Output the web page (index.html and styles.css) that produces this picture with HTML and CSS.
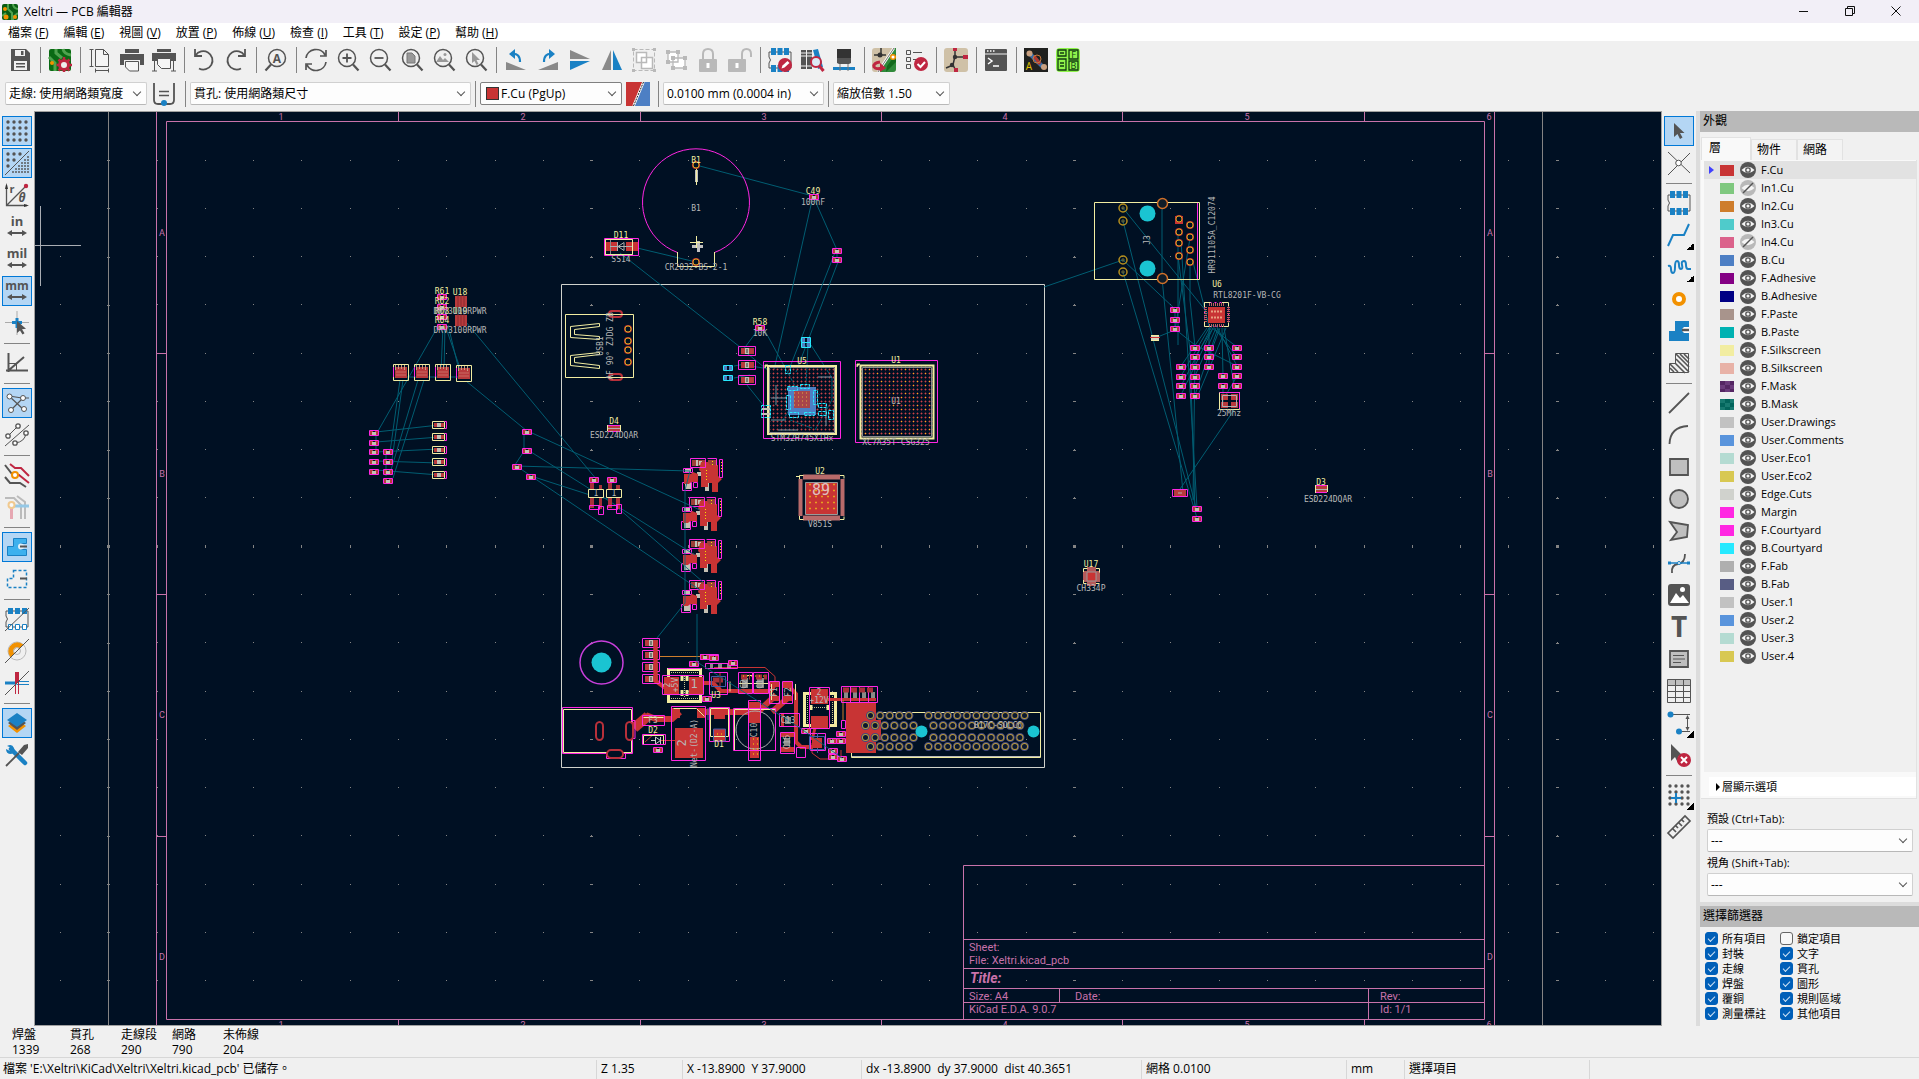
FILE: index.html
```html
<!DOCTYPE html>
<html lang="zh-Hant">

<head>
    <meta charset="UTF-8" />
    <meta name="viewport" content="width=device-width, initial-scale=1.0" />
    <title>Xeltri — PCB 編輯器</title>
    <link rel="stylesheet" href="styles.css">
</head>

<body>
    <!-- Shared symbols -->
    <svg class="defs" width="0" height="0">
        <symbol id="eye" viewBox="0 0 16 16">
            <circle cx="8" cy="8" r="8" fill="#545454" />
            <path d="M1.5 8Q8 1.5 14.5 8Q8 14.5 1.5 8z" fill="#f5f5f5" />
            <circle cx="8" cy="8" r="2.2" fill="none" stroke="#545454" stroke-width="1.3" />
        </symbol>
        <symbol id="eye-off" viewBox="0 0 16 16">
            <circle cx="8" cy="8" r="8" fill="#b9b9b9" />
            <path d="M1.5 8Q8 1.5 14.5 8Q8 14.5 1.5 8z" fill="#f5f5f5" />
            <path d="M3 13L13 3" stroke="#545454" stroke-width="1.5" />
        </symbol>
        <symbol id="lens" viewBox="0 0 24 24">
            <circle cx="11" cy="10" r="8.5" fill="none" stroke="#545454" stroke-width="1.5" />
            <path d="M17 16.5l5.5 6" stroke="#545454" stroke-width="2.2" />
        </symbol>
        <symbol id="chip" viewBox="0 0 24 24">
            <path d="M1 4h22v16H1v-5q3-3 0-6z" fill="none" stroke="#545454" />
            <path d="M3 0h5v7H3zM9.5 0h5v7h-5zM16 0h5v7h-5zM3 17h5v7H3zM9.5 17h5v7h-5zM16 17h5v7h-5z" fill="#1a81c4" />
        </symbol>
        <symbol id="dblarrow" viewBox="0 0 24 24">
            <path d="M4 18h16" stroke="#545454" stroke-width="2" />
            <path d="M2 18l5-3v6zM22 18l-5-3v6z" fill="#545454" />
        </symbol>
    </svg>

    <header class="titlebar">
        <svg class="app-icon" viewBox="0 0 16 16">
            <rect width="16" height="16" rx="2" fill="#0a5c14" />
            <path d="M6 0v5l4 4v7M11 0q0 4 5 5M0 12l4-3M11 16v-3l5-4" fill="none" stroke="#4ea34e" stroke-width="2" />
            <circle cx="3" cy="5" r="2" fill="#f29100" /><circle cx="4" cy="13" r="2.5" fill="#f29100" /><circle cx="13" cy="13" r="2" fill="#f29100" />
        </svg>
        <h1>Xeltri — PCB 編輯器</h1>
        <div class="window-buttons">
            <button title="最小化"><svg viewBox="0 0 10 10"><path d="M0 5.5h9" /></svg></button>
            <button title="還原"><svg viewBox="0 0 10 10"><path d="M.5 2.5h7v7h-7zM2.5 2V.5h7v7H8" /></svg></button>
            <button title="關閉"><svg viewBox="0 0 10 10"><path d="M.5.5l9 9M9.5.5l-9 9" /></svg></button>
        </div>
    </header>

    <nav class="menubar">
        <a href="#">檔案 (<u>F</u>)</a>
        <a href="#">編輯 (<u>E</u>)</a>
        <a href="#">視圖 (<u>V</u>)</a>
        <a href="#">放置 (<u>P</u>)</a>
        <a href="#">佈線 (<u>U</u>)</a>
        <a href="#">檢查 (<u>I</u>)</a>
        <a href="#">工具 (<u>T</u>)</a>
        <a href="#">設定 (<u>P</u>)</a>
        <a href="#">幫助 (<u>H</u>)</a>
    </nav>

    <!-- Main toolbar -->
    <div class="toolbar main-tools">
        <button title="儲存"><svg viewBox="0 0 24 24"><path d="M3 1h15l4 4v18H3z" fill="#545454" /><path d="M7 2h10v6H7zM6 13h13v9H6z" fill="#f0f0f0" /><path d="M13 3h2.5v4H13zM8 15h9v1.5H8zM8 18h9v1.5H8z" fill="#545454" /></svg></button>
        <i class="sep"></i>
        <button title="電路板設定"><svg viewBox="0 0 24 24"><rect x="1" y="1" width="22" height="22" rx="2" fill="#0a6a14" /><path d="M8 1v4l6 5M15 1q1 5 8 6M1 9l6 6v8" fill="none" stroke="#4ea34e" stroke-width="3" /><circle cx="4" cy="15" r="2" fill="#f29100" /><circle cx="16" cy="17" r="4.5" fill="#eee" stroke="#bf2641" stroke-width="3" /><path d="M16 9v3M16 21v3M8.5 17h3M20 17h4M10.5 11.5l2 2M21.5 11.5l-2 2M10.5 22.5l2-2M21.5 22.5l-2-2" stroke="#bf2641" stroke-width="2.5" /></svg></button>
        <i class="sep"></i>
        <button title="頁面設定"><svg viewBox="0 0 24 24"><path d="M7.5 1.5h8l5 5v12h-13zM15.500 1.500v5h5" fill="#f5f5f5" stroke="#545454" /><path d="M3.5 1v18M1.5 1.5h4M1.5 18.5h4M7 22.500h14M7.500 20.5v4M20.500 20.5v4" stroke="#545454" fill="none" /></svg></button>
        <button title="列印"><svg viewBox="0 0 24 24"><path d="M5 1h14v4H5zM0 6h24v11h-4v-5H4v5H0z" fill="#545454" /><path d="M5.5 13.5h13v9.500h-9l-4-4z" fill="#f5f5f5" stroke="#545454" /></svg></button>
        <button title="繪圖"><svg viewBox="0 0 24 24"><path d="M5 1h14v3H5zM0 5h24v8H0z" fill="#545454" /><path d="M5.5 10.5h13v10h-9l-4-4zM2.5 13v10M21.5 13v10M0 23h5M19 23h5" fill="#f5f5f5" stroke="#545454" /></svg></button>
        <i class="sep"></i>
        <button title="復原"><svg viewBox="0 0 24 24"><path d="M3 1v7h7M3.500 7.500A9.200 9.200 0 1 1 7 20.500" fill="none" stroke="#545454" stroke-width="1.800" /></svg></button>
        <button title="重做"><svg viewBox="0 0 24 24"><path d="M21 1v7h-7M20.500 7.500A9.200 9.200 0 1 0 17 20.500" fill="none" stroke="#545454" stroke-width="1.800" /></svg></button>
        <i class="sep"></i>
        <button title="尋找"><svg viewBox="0 0 24 24"><circle cx="13" cy="10" r="8.5" fill="none" stroke="#545454" stroke-width="1.5" /><path d="M7 16.5l-5.5 6" stroke="#545454" stroke-width="2.2" /><text x="13" y="14.500" class="glyph" font-size="12">A</text></svg></button>
        <i class="sep"></i>
        <button title="重新整理"><svg viewBox="0 0 24 24"><path d="M2 10A10 9.500 0 0 1 21 7M22 2v6h-6M22 14A10 9.500 0 0 1 3 17M2 22v-6h6" fill="none" stroke="#545454" stroke-width="1.700" /></svg></button>
        <button title="放大"><svg viewBox="0 0 24 24"><use href="#lens" /><path d="M11 5.5v9M6.5 10h9" stroke="#545454" stroke-width="1.800" /></svg></button>
        <button title="縮小"><svg viewBox="0 0 24 24"><use href="#lens" /><path d="M6.5 10h9" stroke="#545454" stroke-width="1.800" /></svg></button>
        <button title="縮放至頁面"><svg viewBox="0 0 24 24"><use href="#lens" /><path d="M7 5h5l3 3v7H7z" fill="#999" stroke="#777" /></svg></button>
        <button title="縮放至物件"><svg viewBox="0 0 24 24"><use href="#lens" /><path d="M4 14l4-6 3 4 2-2 4 4z" fill="#999" /><circle cx="13" cy="6.5" r="1.5" fill="#999" /></svg></button>
        <button title="縮放至選取"><svg viewBox="0 0 24 24"><use href="#lens" /><path d="M8 4v11l2.5-2 2 4 2-1-2-4h3.500z" fill="#999" /></svg></button>
        <i class="sep"></i>
        <button title="逆時針旋轉"><svg viewBox="0 0 24 24"><path d="M2 14v8h20z" fill="#898989" /><path d="M8 6q8-1 8 8" fill="none" stroke="#1a81c4" stroke-width="2.200" /><path d="M5 6l6-5v10z" fill="#1a81c4" /></svg></button>
        <button title="順時針旋轉"><svg viewBox="0 0 24 24"><path d="M22 14v8H2z" fill="#898989" /><path d="M16 6q-8-1-8 8" fill="none" stroke="#1a81c4" stroke-width="2.200" /><path d="M19 6l-6-5v10z" fill="#1a81c4" /></svg></button>
        <button title="垂直翻轉"><svg viewBox="0 0 24 24"><path d="M2 2v9h20z" fill="#898989" /><path d="M2 22v-9h20z" fill="#1a81c4" /></svg></button>
        <button title="水平翻轉"><svg viewBox="0 0 24 24"><path d="M2 22h9V2z" fill="#898989" /><path d="M22 22h-9V2z" fill="#1a81c4" /></svg></button>
        <button title="群組" disabled><svg viewBox="0 0 24 24"><path d="M1.5 1.5h21v21h-21z" fill="none" stroke="#b9b9b9" stroke-dasharray="4 2" /><path d="M4.5 4.5h10v10h-10zM9.500 9.500h11v11h-11z" fill="#fff" stroke="#b9b9b9" stroke-width="1.5" /><path d="M0 0h3v3H0zM21 0h3v3h-3zM0 21h3v3H0zM21 21h3v3h-3z" fill="#b9b9b9" /></svg></button>
        <button title="取消群組" disabled><svg viewBox="0 0 24 24"><path d="M4 4h10v10H4zM9 10h12v10H9z" fill="#fff" stroke="#b9b9b9" stroke-width="1.3" /><path d="M2 2h4v4H2zM12 2h4v4h-4zM2 12h4v4H2zM7 8h4v4H7zM19 8h4v4h-4zM7 18h4v4H7zM19 18h4v4h-4z" fill="#b9b9b9" /></svg></button>
        <button title="鎖定" disabled><svg viewBox="0 0 24 24"><path d="M7 12V6q0-5 5-5t5 5v6" fill="none" stroke="#b9b9b9" stroke-width="2" /><rect x="3" y="11" width="18" height="13" rx="1" fill="#b9b9b9" /><path d="M12 15v5" stroke="#fff" stroke-width="3" /></svg></button>
        <button title="解除鎖定" disabled><svg viewBox="0 0 24 24"><path d="M14 12V6q0-5 4.500-5T23 6v3" fill="none" stroke="#b9b9b9" stroke-width="2" /><rect x="0" y="11" width="18" height="13" rx="1" fill="#b9b9b9" /><path d="M9 15v5" stroke="#fff" stroke-width="3" /></svg></button>
        <i class="sep"></i>
        <button title="封裝編輯器"><svg viewBox="0 0 24 24"><use href="#chip" /><circle cx="17" cy="17" r="7" fill="#bf2641" /><path d="M13.5 20.500l1-3 5-4.500 2 2-5 4.500z" fill="#fff" /></svg></button>
        <button title="瀏覽封裝庫"><svg viewBox="0 0 24 24"><path d="M1 2h5v19H1zM7 2h5v19H7z" fill="#545454" /><path d="M1 5h11M1 8h11M1 18h11" stroke="#f0f0f0" /><path d="M13 2l5-1 5 18-5 2z" fill="#1a81c4" /><circle cx="16" cy="14" r="5" fill="#dcebf5" stroke="#bf2641" stroke-width="2" /><path d="M19.500 18l4 5" stroke="#bf2641" stroke-width="3" /></svg></button>
        <button title="3D 檢視器"><svg viewBox="0 0 24 24"><path d="M5 1h14v9H5z" fill="#333" /><path d="M5 10h14v5l-2 1H7l-2-1z" fill="#545454" /><path d="M1 19h22v3H1z" fill="#1a81c4" /><path d="M8 16v7M16 16v7" stroke="#777" /></svg></button>
        <i class="sep"></i>
        <button title="從原理圖更新"><svg viewBox="0 0 24 24"><rect width="24" height="24" rx="3" fill="#cfc1a7" /><path d="M22 0h2v21q0 3-3 3H6z" fill="#2f8a3a" /><path d="M14 24l10-10v-8l-9 12z" fill="#126a1c" /><path d="M9 0v8M2 7h12" stroke="#333" stroke-width="1.500" /><circle cx="8" cy="7" r="2.500" fill="#333" /><path d="M22 0L6 24" stroke="#fff" stroke-width="2.500" /><path d="M22 0L6 24" stroke="#333" stroke-width=".7" /><circle cx="21" cy="9" r="2.300" fill="#fff" stroke="#f29100" stroke-width="1.500" /><path d="M8 14q-7 1-6 5 2 3 8 1" fill="none" stroke="#bf2641" stroke-width="3" /><path d="M8 15l6 5-6 4z" fill="#bf2641" /></svg></button>
        <button title="設計規則檢查"><svg viewBox="0 0 24 24"><path d="M2.5 2.5h4v4h-4zM2.5 9.5h4v4h-4zM2.5 16.5h4v4h-4z" fill="none" stroke="#545454" /><path d="M9 4.500h9M9 11.500h4" stroke="#545454" /><circle cx="17" cy="16" r="7" fill="#bf2641" /><path d="M13.5 16l3 3 4.500-5" fill="none" stroke="#fff" stroke-width="2" /></svg></button>
        <i class="sep"></i>
        <button title="原理圖編輯器"><svg viewBox="0 0 24 24"><rect width="24" height="24" rx="3" fill="#cfc1a7" /><path d="M11 0v8l-2 9M11 9h10M2 20l7-3 3 6" fill="none" stroke="#333" stroke-width="1.500" /><path d="M9 0h4v3H9zM19 7h5v4h-5zM10 20h4v4h-4z" fill="#bf2641" /><circle cx="11" cy="9" r="2.200" fill="#333" /><circle cx="8" cy="17" r="2.200" fill="#333" /></svg></button>
        <i class="sep"></i>
        <button title="指令稿主控台"><svg viewBox="0 0 24 24"><rect x="1" y="1" width="22" height="22" rx="1" fill="#545454" /><path d="M1 6h22" stroke="#f0f0f0" /><path d="M3 3h1.500M6 3h1.500M9 3h1.500" stroke="#fff" stroke-width="1.500" /><path d="M4 10l4 3-4 3M9 18h6" fill="none" stroke="#fff" stroke-width="1.500" /></svg></button>
        <i class="sep"></i>
        <button title="外掛程式"><svg viewBox="0 0 24 24"><rect width="24" height="24" fill="#20211f" /><path d="M5 5l14 14" stroke="#3a6ea8" stroke-width="4" /><path d="M10 8l6 8" stroke="#b2372e" stroke-width="3" /><circle cx="5.500" cy="5.500" r="3" fill="#c9a080" /><circle cx="20" cy="19" r="3" fill="#c9a080" /><circle cx="13" cy="11" r="4" fill="none" stroke="#c97a3e" /><text x="5" y="22" font-size="10" text-anchor="middle" fill="#e0c000">A</text></svg></button>
        <button title="FAB 工具"><svg viewBox="0 0 24 24"><rect width="24" height="24" rx="4" fill="#8ff34b" /><path d="M2 2h8v6H2zM2 11h8v11H2zM13 2h9v9h-9zM13 13h9v9h-9zM4 5h4M4 15h4M4 18h4" fill="none" stroke="#123b12" stroke-width="1.300" /><text x="17.500" y="10" font-size="9" text-anchor="middle" fill="#123b12">F</text><text x="17.500" y="21" font-size="9" text-anchor="middle" fill="#123b12">B</text></svg></button>
    </div>

    <!-- Track / via / layer selectors -->
    <div class="toolbar aux-tools">
        <span class="select w-track"><select aria-label="走線"><option>走線: 使用網路類寬度</option></select></span>
        <button title="自動走線寬度"><svg viewBox="0 0 24 24"><path d="M2 1v17q0 4 4 4h12q4 0 4-4V1" fill="none" stroke="#545454" stroke-width="1.800" /><path d="M7 9.500h10M7 13.500h10" stroke="#545454" stroke-width="1.500" /><circle cx="12" cy="21" r="3" fill="#1a81c4" /></svg></button>
        <i class="sep"></i>
        <span class="select w-via"><select aria-label="貫孔"><option>貫孔: 使用網路類尺寸</option></select></span>
        <i class="sep"></i>
        <span class="select w-layer dark"><i class="swatch fcu"></i><select aria-label="層"><option>F.Cu (PgUp)</option></select></span>
        <button title="層對"><svg viewBox="0 0 24 24"><path d="M0 0h17L7 24H0z" fill="#c83434" /><path d="M17 0h7v24H7z" fill="#4d7fc4" /><path d="M17.500 0L7.500 24" stroke="#fff" stroke-width="2.500" /><path d="M17.500 0L7.500 24" stroke="#222" stroke-dasharray="2 1" /></svg></button>
        <i class="sep"></i>
        <span class="select w-grid"><select aria-label="網格"><option>0.0100 mm (0.0004 in)</option></select></span>
        <i class="sep"></i>
        <span class="select w-zoom"><select aria-label="縮放"><option>縮放倍數 1.50</option></select></span>
    </div>

    <main class="workspace">
        <!-- Left display options -->
        <div class="toolbar side">
            <button class="on" title="顯示網格"><svg viewBox="0 0 24 24"><path d="M3 3h20M3 9h20M3 15h20M3 21h20" stroke="#545454" stroke-width="3.400" stroke-linecap="round" stroke-dasharray="0 6" /></svg></button>
            <button class="on" title="網格覆寫"><svg viewBox="0 0 24 24"><path d="M3 3h14M3 9h8M3 15h2" stroke="#545454" stroke-width="3.400" stroke-linecap="round" stroke-dasharray="0 6" /><path d="M23 5v18M20 8v15M17 11v12M14 14v9M11 17v6M8 20v3" stroke="#545454" stroke-width="2" stroke-dasharray="2 1" opacity=".7" /><path d="M0 24L24 0" stroke="#545454" /></svg></button>
            <button title="極座標"><svg viewBox="0 0 24 24"><path d="M1.5 2v20.500H22M1.5 22.500L21 3" fill="none" stroke="#545454" stroke-width="1.300" /><path d="M0 6l1.500-6L3 6zM19 21l5 1.500-5 1.500z" fill="#333" /><circle cx="21" cy="3" r="2.200" fill="#bf2641" /><text x="7" y="10" class="glyph" font-size="11">r</text><text x="17" y="19" class="glyph" font-size="12" font-style="italic">θ</text></svg></button>
            <button title="英寸"><svg viewBox="0 0 24 24"><text x="12" y="11" class="glyph" font-size="13">in</text><use href="#dblarrow" /></svg></button>
            <button title="密耳"><svg viewBox="0 0 24 24"><text x="12" y="11" class="glyph" font-size="13">mil</text><use href="#dblarrow" /></svg></button>
            <button class="on" title="毫米"><svg viewBox="0 0 24 24"><text x="12" y="11" class="glyph" font-size="12">mm</text><use href="#dblarrow" /></svg></button>
            <button title="全螢幕游標"><svg viewBox="0 0 24 24"><path d="M12 0v24M0 11.500h24" stroke="#aaa" /><path d="M12 7v10M7 11.500h10" stroke="#1a81c4" stroke-width="3" /><path d="M12 10v12l3-2.500 2.500 4 2-1.200-2.500-4 4-.5z" fill="#545454" /></svg></button>
            <i class="sep"></i>
            <button title="角度限制"><svg viewBox="0 0 24 24"><path d="M3.500 2v19M1 19.500h22M3.500 19.500L19 6" fill="none" stroke="#545454" stroke-width="2" /><path d="M3.500 12.500h8v7" fill="none" stroke="#545454" /></svg></button>
            <i class="sep"></i>
            <button class="on" title="顯示飛線"><svg viewBox="0 0 24 24"><path d="M4 5l15 14M6 19L18 7M4 5l13 2h7" fill="none" stroke="#545454" stroke-width="1.200" /><g fill="#fff" stroke="#545454"><circle cx="4.500" cy="5.500" r="2.500" /><circle cx="18" cy="7" r="2.500" /><circle cx="6" cy="19" r="2.500" /><circle cx="19" cy="18" r="2.500" /></g></svg></button>
            <button title="曲線飛線"><svg viewBox="0 0 24 24"><path d="M0 23L24 2M3 13l9-9M10 20q10-1 11-10" fill="none" stroke="#545454" /><g fill="#fff" stroke="#545454" stroke-width="1.300"><circle cx="3" cy="13" r="2.200" /><circle cx="13" cy="3" r="2.200" /><circle cx="10" cy="20" r="2.200" /><circle cx="21" cy="10" r="2.200" /></g></svg></button>
            <i class="sep"></i>
            <button title="非作用層模式"><svg viewBox="0 0 24 24"><path d="M0 2l7 9h4M0 14l5 6h10l6 4" fill="none" stroke="#545454" stroke-width="2" /><path d="M5 1l5 4h6l8 8M10 12h4l10 8" fill="none" stroke="#bf2641" stroke-width="2" /><circle cx="10" cy="12" r="3" fill="#fff" stroke="#f29100" stroke-width="2" /></svg></button>
            <button title="網路反白" class="faded"><svg viewBox="0 0 24 24"><path d="M0 3h9l7 7v14M12 1l8 6v17" fill="none" stroke="#999" stroke-width="2" /><path d="M8 11h16" stroke="#5aaee0" stroke-width="3" /><path d="M6.500 12v12" stroke="#e0788a" stroke-width="3" /><circle cx="6.500" cy="10" r="3" fill="#fff" stroke="#f2b050" stroke-width="2" /></svg></button>
            <i class="sep"></i>
            <button class="on" title="覆銅填充"><svg viewBox="0 0 24 24"><path d="M8.500 3.500h13v5H16q-4 3 0 6h5.500v6h-19v-9h6z" fill="#3db1ee" stroke="#1a81c4" /><circle cx="16" cy="11.500" r="3" fill="#dff0fb" /><path d="M15 11.500h7" stroke="#545454" stroke-width="2" /></svg></button>
            <button title="覆銅輪廓"><svg viewBox="0 0 24 24"><path d="M8.500 3.500h13v17h-19v-9h6z" fill="none" stroke="#1a81c4" stroke-width="1.500" stroke-dasharray="3 2" /><path d="M15 11.500h7" stroke="#545454" stroke-width="2" /></svg></button>
            <i class="sep"></i>
            <button title="焊盤輪廓"><svg viewBox="0 0 24 24"><path d="M1 4h22v16H1v-5q3-3 0-6z" fill="none" stroke="#545454" /><path d="M3 1h5v6H3zM10 1h5v6h-5zM17 1h5v6h-5z" fill="#1a81c4" /><path d="M3.500 17.500h4v5h-4zM10.500 17.500h4v5h-4zM17.500 17.500h4v5h-4z" fill="#fff" stroke="#1a81c4" /><path d="M0 24L24 1" stroke="#545454" /></svg></button>
            <button title="貫孔輪廓"><svg viewBox="0 0 24 24"><circle cx="12" cy="12" r="9" fill="none" stroke="#b9b9b9" /><path d="M6 18A8.500 8.500 0 0 1 18 6l-3.500 3.500a3.500 3.500 0 0 0-5 5z" fill="#f29100" stroke="#f29100" /><circle cx="12" cy="12" r="3.500" fill="none" stroke="#b9b9b9" /><path d="M0 24L24 0" stroke="#545454" /></svg></button>
            <button title="走線輪廓"><svg viewBox="0 0 24 24"><path d="M0 12h12" stroke="#1a81c4" stroke-width="3" /><path d="M12 10.500h12M12 13.500h12" stroke="#1a81c4" /><path d="M12 1v11" stroke="#bf2641" stroke-width="4" /><path d="M10.500 12v11M13.500 12v11" stroke="#bf2641" /><path d="M0 24L24 0" stroke="#545454" /></svg></button>
            <i class="sep"></i>
            <button class="on" title="外觀管理員"><svg viewBox="0 0 24 24"><path d="M3 15l9-6 9 6-9 7z" fill="#f29100" /><path d="M3 12l9-6 9 6-9 7z" fill="#545454" /><path d="M2 9l10-7 10 7-10 7z" fill="#1a81c4" /></svg></button>
            <button title="屬性"><svg viewBox="0 0 24 24"><path d="M6 6l14 14" stroke="#1a81c4" stroke-width="4.500" stroke-linecap="round" /><path d="M2 3q5-3 7 2t-3 6q-5 0-5-5l4 2 2-3z" fill="#1a81c4" /><path d="M1 23L14 10" stroke="#545454" stroke-width="1.800" /><path d="M13 9l6-7 4-1v4l-6 7z" fill="#545454" /></svg></button>
        </div>

        <!-- Board canvas -->
        <div class="board">
            <svg viewBox="35 112 1626 913" preserveAspectRatio="xMinYMin slice">
                <defs>
                    <pattern id="balls" x="0" y="0" width="4" height="4" patternUnits="userSpaceOnUse">
                        <path d="M0 1h3v1H0zM1 0h1v3H1z" fill="#58202c" />
                        <path d="M1 1h1v1H1z" fill="#c04850" />
                    </pattern>
                    <pattern id="vias" x="0" y="0" width="12" height="12" patternUnits="userSpaceOnUse">
                        <path d="M1 1h1v1H1zM5 9h1v1H5z" fill="#ffe000" />
                    </pattern>
                    <!-- small two-pad resistor / capacitor -->
                    <g id="r">
                        <path d="M-4 -2h3v4h-3zM1 -2h3v4H1z" class="cu" />
                        <path d="M-2 -1h4v3h-4z" class="body" />
                        <path d="M-4.5 -2.500h9v5h-9z" class="court" />
                    </g>
                    <g id="rb">
                        <path d="M-4 -2h3v4h-3zM1 -2h3v4H1z" fill="#4d7fc4" />
                        <path d="M-4.5 -2.500h9v5h-9z" class="bcourt" />
                    </g>
                    <!-- larger capacitor -->
                    <g id="c">
                        <path d="M-6 -3h5v6h-5zM2 -3h5v6H2z" class="cu" />
                        <path d="M-2 -3h4v6h-4z" class="body" />
                        <path d="M-1 -1h2M-1 1h2" stroke="#333" />
                        <path d="M-8.500 -4.500h17v9h-17z" class="court" />
                    </g>
                    <g id="led">
                        <path d="M-5 -2h4v4h-4zM2 -2h4v4H2z" class="cu" />
                        <path d="M-2 -2h4v4h-4z" class="body" />
                        <path d="M-6.500 -3.500h12v7h-12z" class="silk" />
                        <path d="M5.500 -3.500h2v7h-2" class="court" />
                    </g>
                    <!-- driver chip -->
                    <g id="drv">
                        <path d="M-6 -5H6V6H-6z" class="cu" />
                        <path d="M-5.500 -7v5M-2.500 -7v4M.5 -7v4M3.500 -7v5" stroke="#c8a080" />
                        <path d="M-5 0H5M-5 3H5" stroke="#c86a62" />
                        <path d="M-7.500 -7.500h15v16h-15z" class="silk" />
                        <path d="M-7.500 -5v10" class="court" />
                    </g>
                    <!-- plated hole -->
                    <g id="th"><circle r="4" fill="#c83434" /><circle r="3" fill="#001023" stroke="#d9a520" /></g>
                    <g id="npth"><circle r="4" fill="none" stroke="#b58f1e" stroke-width="1.500" /><path d="M-2 0h4M0 -2v4" stroke="#6a6a3a" /></g>
                    <!-- buck stage, repeated down the board -->
                    <g id="stage">
                        <path d="M10 2h13v6H10zM26 2h8v6h-8z" fill="#9c4038" />
                        <path d="M14 2h2v6h-2zM17 3h3v4h-3zM3 11h6v3H3zM3 25h6v6H3zM23 25h4v8h-4zM15 14h6v4h-6z" class="body" />
                        <path d="M.5 24.500h9v8h-9zM11.500 24.500h4v5h-4zM1.500 10.500h9v4h-9z" class="court" />
                        <path d="M2 16h7l2-2 5 2v8H9l-2 2H2zM19 4h7l2 3h8v11l4 3-4 4v9h-6v-9h-4v4h-7V14l-2-2z" fill="#c83434" />
                        <path d="M8.500.5h15v9h-15zM25.500.5h9v7M37.500 1.500h3v18h-3z" class="court" />
                        <path d="M24.500 12v12M30.500 3v4M39.500 4v12" stroke="#ffe000" stroke-dasharray="1 2" />
                    </g>
                </defs>

                <!-- Grid -->
                <g class="grid" shape-rendering="crispEdges">
                    <path d="M60 160.500H1661M60 208.500H1661M60 256.500H1661M60 304.500H1661M60 353.500H1661M60 401.500H1661M60 449.500H1661M60 497.500H1661M60 594.500H1661M60 642.500H1661M60 691.500H1661M60 739.500H1661M60 787.500H1661M60 835.500H1661M60 884.500H1661M60 932.500H1661M60 980.500H1661" stroke-dasharray="1 47.280" />
                    <path d="M60 546.500H1661" stroke-width="3" stroke-dasharray="1 47.280" />
                    <path d="M108.500 160V1025M591.500 160V1025M1074.500 160V1025M1557.500 160V1025" stroke-width="3" stroke-dasharray="1 47.250" />
                    <path d="M590 545h3v3h-3zM107 545h3v3h-3zM1073 545h3v3h-3zM1556 545h3v3h-3z" fill="#848484" stroke="none" />
                    <path d="M108.500 112V1025M1542.500 112V1025" />
                </g>

                <!-- Drawing sheet -->
                <g class="sheet">
                    <path d="M156.500 112V1025M166.500 121.500H1484.500V1019.500H166.500zM1494.500 112V1025" />
                    <path d="M156.500 353.500h10M156.500 594.500h10M156.500 836.500h10M1484.500 353.500h10M1484.500 594.500h10M1484.500 836.500h10M398.500 112v9M640.500 112v9M881.500 112v9M1122.500 112v9M1364.500 112v9M398.500 1019v6M640.500 1019v6M881.500 1019v6M1122.500 1019v6M1364.500 1019v6" />
                    <path d="M963.500 1019V865.500H1484M963.500 939.500H1484M963.500 968.500H1484M963.500 988.500H1484M963.500 1002.500H1484M1059.500 988v14M1368.500 988v31" />
                </g>
                <g class="sheet-mark">
                    <text x="281" y="120">1</text><text x="523" y="120">2</text><text x="764" y="120">3</text><text x="1005" y="120">4</text><text x="1247" y="120">5</text><text x="1489" y="120">6</text>
                    <text x="281" y="1028">1</text><text x="523" y="1028">2</text><text x="764" y="1028">3</text><text x="1005" y="1028">4</text><text x="1247" y="1028">5</text><text x="1489" y="1028">6</text>
                    <text x="162" y="236">A</text><text x="162" y="477">B</text><text x="162" y="718">C</text><text x="162" y="960">D</text>
                    <text x="1490" y="236">A</text><text x="1490" y="477">B</text><text x="1490" y="718">C</text><text x="1490" y="960">D</text>
                </g>
                <g class="sheet-text">
                    <text x="969" y="951">Sheet:</text>
                    <text x="969" y="964">File: Xeltri.kicad_pcb</text>
                    <text x="970" y="983" class="title">Title:</text>
                    <text x="969" y="1000">Size: A4</text><text x="1075" y="1000">Date:</text><text x="1380" y="1000">Rev:</text>
                    <text x="969" y="1013">KiCad E.D.A. 9.0.7</text><text x="1380" y="1013">Id: 1/1</text>
                </g>

                <!-- Cursor -->
                <path d="M40.500 206v80M35 245.500h46" stroke="#a9adb3" />

                <!-- Edge cuts -->
                <path d="M561.500 284.500H1044.500V767.500H561.500z" fill="none" stroke="#d0d2cd" />

                <!-- Inductor frames and solid copper -->
                <g class="silk-thick">
                    <path d="M668.500 678v-8.500h32v8.500M668.500 694v7.500h32v-7.500M682 675v6M682 690v6M687 675v6M687 690v6" />
                    <path d="M811 693.500h-6.500v32h6.500M829 693.500h6.500v32h-6.500M811 705v5M828 705v5" />
                </g>
                <path d="M671 672.500h27M671 698.500h27M807.500 696v27M832.500 696v27M684.500 676v22M812 707.500h15" fill="none" stroke="#c9c68a" stroke-dasharray="1 1" />
                <g fill="#c83434">
                    <path d="M846 702h30v18h5v20h-5v13h-30z" />
                    <path d="M664 677h15v17h-15zM689 677h14v17h-14zM811 689h17v15h-17zM811 716h17v12h-17z" />
                    <path d="M675 728h28v30h-28zM672 708h8v10h-8zM697 708h8v10h-8zM714 708h11v11h-11zM714 729h11v12h-11zM749 702h11v21h-11zM750 737h9v21h-9z" />
                    <path d="M770 682h9v5h-9zM770 696h9v5h-9zM783 682h10v6h-10zM783 696h9v5h-9zM781 714h3v12h-3zM781 732h14v5h-14zM781 747h14v5h-14z" />
                </g>
                <g class="track">
                    <path d="M655.500 641v40l10 7M703 683h10l8 8h50l5-8" stroke-width="4" />
                    <path d="M634 728l14-12 8 3h16l8-7M699 712h50" stroke-width="6" />
                    <path d="M758 712l18-17M772 712l18-16" stroke-width="6" />
                    <path d="M789 686l7 8v48l5 5h12" stroke-width="4" />
                    <path d="M828 699.500h48M815 728l-3 12" stroke-width="3" />
                    <path d="M714 667.500h51l10 9v10M661 740.500h15M812 743v10l8 6h20M655 733l-10 9M720 672v20M841 750v12" stroke-width="1" />
                    <path d="M659 656.500h55M843 700v20" stroke="#ce7d2c" stroke-width="1" />
                </g>
                <path d="M634 728l14-12" stroke="#c83434" stroke-width="10" />
                <g class="silk">
                    <path d="M563.500 709.500H631.500V752.500H563.500zM734.500 709.500H775.500V750.500H734.500zM710.500 708.500H728.500V736.500H710.500zM673.500 708.500h23l8 8M643.500 717.500h20M643.500 735.500h20v9h-20z" />
                    <path d="M851.500 753V757.500H1040.500V712.500H881" />
                    <path d="M739 683.500h30M771.500 684v16M795.500 684v16M745.500 675.500h8M730 681.500v10" />
                </g>
                <path d="M852 756.500H1040" stroke="#bbb" />
                <path d="M651 740.500h4M655.500 737v7l5-3.500zM660.500 737v7" fill="none" stroke="#ccc" />
                <circle cx="755" cy="730" r="19" fill="none" stroke="#afafaf" />
                <g class="court">
                    <path d="M562.500 707.500H632.500V753.500H562.500zM671.500 706.500h34v54h-34zM709.500 707.500h20v34h-20zM733.500 708.500h42v42h-42zM748.500 700.500h12v60h-12z" />
                    <path d="M642.500 715.500h22v10h-22zM642.500 734.500h23v10h-23zM709.500 672.500h18v22h-18zM738.500 672.500h14v21h-14zM753.500 672.500h15v21h-15zM769.500 681.500h10v22h-10zM782.500 681.500h10v22h-10zM779.500 713.500h20v13h-20zM780.500 732.500h14v21h-14zM809.500 687.500h20v41h-20zM668 668.500h33M796.500 747.500h9v10h-9zM810.500 733.500h15v17h-15zM662.500 675.500h41v19h-41z" />
                    <path d="M841.500 686.500h36v16h-36zM850.500 686v16M859.500 686v16M868.500 686v16M705.500 663.500h32v5h-32zM700.500 654.500h18v5h-18zM606.500 753.500v5h19v-5M631 720.500h4v18h-4M841.500 720.500h4v8h-4z" />
                </g>
                <path d="M742 678h6v10h-6zM757 678h7v10h-7zM710 664h3v4h-3zM718 664h4v4h-4zM727 664h4v4h-4zM785 717h6v7h-6zM784 738h6v8h-6zM844 692h4v6h-4zM853 692h4v6h-4zM862 692h4v6h-4zM871 692h4v6h-4z" class="body" opacity=".7" />
                <path d="M741 677h9M756 677h11M843 690h32M713 680h10" stroke="#a83038" stroke-width="5" stroke-dasharray="6 2" />
                <path d="M753 739h5M753 744h5M753 749h5M753 754h5M713 734h12M743 676h24M646 643v6M646 655v6M646 667v6" stroke="#ffe000" stroke-dasharray="1 3" />
                <path d="M711.500 676.500h14v10h-14zM809.500 736.500h15v13h-15zM817.500 733v20M708 708v12M713.500 729h12v12h-12z" stroke="#445caa" fill="none" />
                <path d="M812 738h10v10h-10z" fill="#c83434" />

                <!-- Input filter caps -->
                <use href="#c" x="651" y="643" /><use href="#c" x="651" y="655" /><use href="#c" x="651" y="667" /><use href="#c" x="651" y="679" />
                <path d="M655.500 641v41" class="track" stroke-width="4" />
                <use href="#r" x="694" y="664" /><use href="#r" x="705" y="657" /><use href="#r" x="714" y="658" /><use href="#r" x="733" y="663" /><use href="#r" x="658" y="750" /><use href="#r" x="707" y="699" />
                <use href="#r" x="806" y="731" /><use href="#r" x="832" y="741" /><use href="#r" x="841" y="741" /><use href="#r" x="833" y="751" /><use href="#r" x="833" y="757" /><use href="#r" x="842" y="759" /><use href="#r" x="841" y="734" />

                <!-- Barrel jack and USB shield slots -->
                <g class="slot">
                    <rect x="596" y="722" width="7" height="18" rx="4" /><rect x="626" y="722" width="7" height="18" rx="4" /><rect x="607" y="750" width="16" height="8" rx="4" />
                    <rect x="609" y="311" width="13" height="6" rx="3" /><rect x="609" y="374" width="13" height="6" rx="3" />
                </g>

                <!-- Edge connector -->
                <g class="pins">
                    <path d="M870.500 715.500h40M928.500 715.500h98M865.500 725.500h50M933.500 725.500h90M865.500 737.500h50M933.500 737.500h90M870.500 746.500h40M928.500 746.500h98" stroke="#44497c" stroke-width="9" />
                    <path d="M870.500 715.500h40M928.500 715.500h98M865.500 725.500h50M933.500 725.500h90M865.500 737.500h50M933.500 737.500h90M870.500 746.500h40M928.500 746.500h98" stroke="#b5973c" stroke-width="7" />
                    <path d="M870.500 715.500h40M928.500 715.500h98M865.500 725.500h50M933.500 725.500h90M865.500 737.500h50M933.500 737.500h90M870.500 746.500h40M928.500 746.500h98" stroke="#0b1830" stroke-width="5" />
                </g>
                <g class="hole"><circle cx="921.500" cy="731.500" r="6" /><circle cx="1033.500" cy="731.500" r="6" /><circle cx="601.500" cy="662.500" r="10" /><circle cx="1147.500" cy="213.500" r="8" /><circle cx="1147.500" cy="268.500" r="8" /></g>
                <circle cx="601.500" cy="662.500" r="21.500" fill="none" stroke="#c93fdc" stroke-width="1.500" />

                <!-- Buck stages -->
                <use href="#stage" x="682" y="458" /><use href="#stage" x="681" y="497" /><use href="#stage" x="681" y="539" /><use href="#stage" x="681" y="580" />

                <!-- Ratsnest -->
                <g class="rats">
                    <path d="M696 165L813 196L837 250M813 196L774 370M633 247L696 262M620 253L740 347M836 250L788 372M838 262L796 372M837 250v10M757 331L743 350M765 331L800 395M808 345L806 385L820 395M811 345L832 378V400L815 430M743 350L770 372M745 365L769 369M747 385L767 410M734 378L750 375M734 366L745 364M780 425L800 392M790 420L812 428" />
                    <path d="M443 325L441 372M445 325L444 372M446 328L460 368M448 325L458 366M437 328L378 431M466 322L597 480M466 381L527 431M524 434V451L515 465L531 476M516 466L690 471L685 490V603L657 638M532 433L700 510M531 452L695 555M531 476L590 495L608 499M534 478L700 590M618 508L703 582" />
                    <path d="M376 432L439 425M376 442L439 437M376 452L439 449M376 461L439 463M376 470L439 475M400 380L390 452M403 380L392 460M418 380L391 470M424 380L393 478M386 452v24M400 377H462M376 432v20M697 614V662L800 728L842 758" />
                    <path d="M1044 287L1123 260M1123 208L1210 316M1123 221L1196 508M1123 260L1175 309M1123 272L1197 518M1162 203V278L1183 492M1178 231V345M1181 240L1197 508M1190 238L1175 330L1155 338M1190 262V300L1195 347M1193 262L1210 330M1178 256L1190 350L1195 512M1234 410L1178 492" />
                    <path d="M1207 328L1181 366M1209 328L1181 376M1211 328L1181 386M1213 328L1181 395M1213 328L1195 357M1216 328L1195 376M1218 328L1195 395M1220 328L1209 357M1222 328L1223 376M1208 325L1237 347M1212 325L1237 357M1216 325L1237 366M1224 328L1234 385M1226 328L1196 400M1209 328V366M1175 310v19L1195 345L1237 366M1237 376L1223 400M1223 385v20M1195 357L1193 500" />
                </g>

                <!-- Coin cell -->
                <path d="M677.500 252.500A53.500 53.500 0 1 1 714.500 252.500" class="court" />
                <path d="M695 170h3v12h-3zM692 245h11v3h-11zM697 241h3v11h-3z" fill="#c0c0c0" />
                <path d="M677.500 252V266.500H714.500V252M696.500 168v17M696.500 236v12M690 242.500h13" class="silk" />
                <use href="#th" x="696" y="165" /><use href="#th" x="696" y="262" />

                <!-- D11 -->
                <path d="M606 242h11v9h-11zM626 242h12v9h-12z" fill="#c83434" />
                <path d="M610.500 239.500h22v15h-22z" fill="none" stroke="#8a8a8a" />
                <path d="M604.500 239.500h28v15h-28z" class="silk" /><path d="M604.500 238.500h34v17h-34z" class="court" /><path d="M605.500 239v16" stroke="#f2eda1" />
                <path d="M610 246.500h22M617.500 242v9M618 246.500l6-4v8z" fill="none" stroke="#afafaf" />

                <!-- USB -->
                <path d="M565.500 314.500h68v63h-68z" class="silk" />
                <path d="M599.500 323.500L570.500 326.500V337.500L599.500 339.500V336.500L574.500 334.500V329.500L599.500 326.500zM599.500 352.500L570.500 355.500V365.500L599.500 368.500V365.500L574.500 362.500V357.500L599.500 354.500z" class="silk" />
                <use href="#th" x="628" y="329" /><use href="#th" x="628" y="341" /><use href="#th" x="628" y="350" /><use href="#th" x="628" y="362" />

                <!-- BGAs -->
                <path d="M768 366h68v68h-68zM861 366h72v71h-72z" fill="url(#balls)" />
                <path d="M861 366h72v71h-72z" fill="url(#vias)" opacity=".8" />
                <path d="M768 366h68v68h-68zM860.500 365.500h73v73h-73z" fill="none" stroke="#f2eda1" stroke-width="2" />
                <path d="M769.500 367.500h65v65h-65zM862.500 367.500h69v69h-69z" fill="none" stroke="#8a8d90" />
                <path d="M765 368v-3h3M857 367v-3h3" fill="#f2eda1" stroke="#f2eda1" />
                <path d="M763.500 361.500h77v77h-77zM855.500 360.500h82v82h-82z" class="court" />
                <path d="M771 398h16M771 420h15M818 377h14M776 385v20M826 408v18M778 430h20" stroke="#6d8f9c" />
                <path d="M788 387h28v28h-28z" fill="#4d7fc4" />
                <path d="M794 391h16v17h-16z" fill="#a8444a" /><path d="M794 393h16M794 397h16M794 401h16M794 405h16" stroke="#e0b040" stroke-dasharray="1 3" />
                <path d="M787.500 386.500h10v4h-10zM800.500 384.500h9v4h-9zM786.500 395.500h4v14h-4zM813.500 390.500h4v14h-4zM789.500 412.500h9v5h-9zM804.500 412.500h10v3h-10zM761.500 405.500h9v12h-9zM828.500 410.500h5v9h-5zM785.500 365.500h5v8h-5zM818.500 403.500h8v4h-8zM818.500 411.500h8v4h-8z" class="bcourt" stroke-dasharray="3 1" />
                <path d="M762 408h8v2h-8zM762 413h8v2h-8z" class="body" />

                <!-- U2 -->
                <path d="M803 474.500h37v5h-37zM803 515.500h37v5h-37zM798.500 479h4v37h-4zM840.500 479h4v37h-4z" fill="#b86a6a" />
                <path d="M799.500 479v-3.500h4M840 475.500h4v3M799.500 516v3.500h4M840 519.500h4v-3M796 476.500h4" class="silk" />
                <path d="M805.500 482.500h32v32h-32z" fill="#c83434" stroke="#9a9a9a" /><path d="M809 484.500h28M809 490.500h28M809 496.500h28M809 502.500h28M809 508.500h28" stroke="#e8a020" stroke-width="1.500" stroke-dasharray="2 4" />

                <!-- Passives -->
                <use href="#r" x="814" y="197" /><use href="#r" x="837" y="251" /><use href="#r" x="837" y="260" /><use href="#r" x="760" y="328" />
                <use href="#c" x="747" y="351" /><use href="#c" x="747" y="365" /><use href="#c" x="747" y="380" />
                <use href="#rb" x="728" y="368" /><use href="#rb" x="728" y="378" /><use href="#rb" x="806" y="340" /><use href="#rb" x="806" y="345" />
                <use href="#r" x="374" y="433" /><use href="#r" x="374" y="443" /><use href="#r" x="374" y="452" /><use href="#r" x="374" y="462" /><use href="#r" x="374" y="472" />
                <use href="#r" x="388" y="452" /><use href="#r" x="388" y="462" /><use href="#r" x="388" y="472" /><use href="#r" x="388" y="481" />
                <use href="#led" x="439" y="425" /><use href="#led" x="439" y="437" /><use href="#led" x="439" y="450" /><use href="#led" x="439" y="462" /><use href="#led" x="439" y="475" />
                <use href="#r" x="527" y="432" /><use href="#r" x="527" y="451" /><use href="#r" x="517" y="467" /><use href="#r" x="531" y="477" />
                <use href="#drv" x="401" y="372" /><use href="#drv" x="422" y="372" /><use href="#drv" x="443" y="372" /><use href="#drv" x="464" y="373" />
                <path d="M455 296h12v11h-12zM455 315h12v11h-12z" class="cu" /><path d="M458 295v13M461 295v13M464 295v13M458 314v13M461 314v13M464 314v13" stroke="#8a2a30" />
                <use href="#r" x="442" y="297" /><use href="#r" x="442" y="307" /><use href="#r" x="442" y="317" /><use href="#r" x="442" y="327" />
                <path d="M590 480h4v28h-4zM599 485h3v24h-3zM608 480h4v28h-4zM616 485h4v24h-4z" fill="#a83038" />
                <path d="M588.500 489.500h15v8h-15zM606.500 489.500h15v8h-15z" fill="#001023" stroke="#f2eda1" />
                <path d="M589.500 505.500h10v4h-10zM607.500 505.500h10v4h-10zM598.500 506.500h5v8h-5zM616.500 504.500h5v9h-5z" class="court" />
                <use href="#r" x="594" y="480" /><use href="#r" x="612" y="480" />
                <path d="M608 426h12v5h-12zM1316 486h11v6h-11z" class="cu" /><path d="M608 428.500h12M1316 489.500h11" stroke="#afafaf" /><path d="M607.500 425v6M620.500 425v6M1315.500 485v8M1327.500 485v7" class="silk" /><path d="M608 425.500h12M608 431.500h12M1316 485.500h11M1316 492.500h11" class="court" />

                <!-- RJ45 -->
                <path d="M1094.500 202.500h105v77h-105z" class="silk" /><path d="M1197.500 203v76" class="court" />
                <use href="#npth" x="1123" y="208" /><use href="#npth" x="1123" y="221" /><use href="#npth" x="1123" y="260" /><use href="#npth" x="1123" y="272" />
                <path d="M1175 216h8v8h-8z" fill="#c83434" />
                <use href="#th" x="1179" y="219" /><use href="#th" x="1179" y="232" /><use href="#th" x="1179" y="243" /><use href="#th" x="1179" y="256" />
                <use href="#th" x="1190" y="225" /><use href="#th" x="1190" y="237" /><use href="#th" x="1190" y="250" /><use href="#th" x="1190" y="262" />
                <g fill="#0f1c28" stroke="#d0702a" stroke-width="1.500"><circle cx="1162.500" cy="203.500" r="5" /><circle cx="1162.500" cy="278.500" r="5" /></g>

                <!-- Ethernet PHY -->
                <path d="M1208 307h17v16h-17z" fill="#c83434" /><path d="M1211 311.500h12M1211 317.500h12" stroke="#e8a080" stroke-width="2" stroke-dasharray="2 1" />
                <path d="M1204.500 302.500h24v24h-24z" class="court" stroke-dasharray="2 3" /><path d="M1204.500 307v-4.500h6M1222 302.500h6.500v4M1204.500 322v4.500h6M1222 326.500h6.500v-4" class="silk" />
                <path d="M1209 304.500h16M1209 325.500h16M1205.500 307v16M1228.500 307v16" stroke="#c06060" stroke-width="3" stroke-dasharray="1 1" />
                <use href="#r" x="1175" y="310" /><use href="#r" x="1175" y="320" /><use href="#r" x="1175" y="329" />
                <path d="M1151 335h8v5h-8z" fill="#d8d8c0" /><path d="M1150 337.500h10" stroke="#c83434" /><path d="M1151 335.500h8M1151 340.500h8" class="silk" />
                <use href="#r" x="1195" y="348" /><use href="#r" x="1195" y="357" /><use href="#r" x="1195" y="367" /><use href="#r" x="1195" y="377" /><use href="#r" x="1195" y="386" /><use href="#r" x="1195" y="396" />
                <use href="#r" x="1181" y="367" /><use href="#r" x="1181" y="377" /><use href="#r" x="1181" y="386" /><use href="#r" x="1181" y="396" />
                <use href="#r" x="1209" y="348" /><use href="#r" x="1209" y="357" /><use href="#r" x="1209" y="367" />
                <use href="#r" x="1237" y="348" /><use href="#r" x="1237" y="357" /><use href="#r" x="1237" y="367" /><use href="#r" x="1237" y="376" /><use href="#r" x="1237" y="386" />
                <use href="#r" x="1223" y="376" /><use href="#r" x="1223" y="386" /><use href="#r" x="1197" y="509" /><use href="#r" x="1197" y="519" />
                <path d="M1221 394h7v6h-7zM1231 394h7v6h-7zM1221 402h7v6h-7zM1231 402h7v6h-7zM1174 490h12v6h-12z" class="cu" />
                <path d="M1219.500 392.500h20v17h-20z" class="silk" /><path d="M1219.500 392.500h20v16M1172.500 489.500h15v7h-15z" class="court" /><path d="M1222.500 395.500h14v11h-14zM1178 493h4" fill="none" stroke="#afafaf" />

                <!-- U17 -->
                <path d="M1083 571h17v11h-17zM1087 567h9v19h-9z" fill="#b45a5a" /><path d="M1087 572h9v9h-9z" fill="#c83434" stroke="#999" />
                <path d="M1083.500 572v-3.500h4M1096 568.500h3.500v4M1083.500 580v3.500h3M1096 583.500h3.500" class="silk" />

                <!-- References -->
                <g class="ref">
                    <text x="696" y="163">B1</text><text x="813" y="194">C49</text><text x="621" y="238">D11</text><text x="760" y="325">R58</text><text x="802" y="364">U5</text><text x="896" y="363">U1</text>
                    <text x="614" y="424">D4</text><text x="820" y="474">U2</text><text x="442" y="294">R61</text><text x="442" y="304">R62</text><text x="442" y="314">R63</text><text x="442" y="323">R64</text><text x="460" y="295">U18</text><text x="460" y="314">U19</text>
                    <text x="1217" y="287">U6</text><text x="1091" y="567">U17</text><text x="1321" y="485">D3</text><text x="653" y="733">D2</text><text x="719" y="747">D1</text><text x="716" y="698">U3</text>
                </g>
                <g class="value">
                    <text x="696" y="211">B1</text><text x="813" y="205">100nF</text><text x="621" y="262">SS14</text><text x="696" y="270">CR2032-BS-2-1</text><text x="760" y="336">10K</text>
                    <text x="802" y="441">STM32H745XIHx</text><text x="896" y="404">U1</text><text x="896" y="445">XC7A35T-CSG325</text><text x="614" y="438">ESD224DQAR</text><text x="820" y="527">V851S</text>
                    <text x="821" y="495" class="big">89</text><text x="460" y="314">DRV3100RPWR</text><text x="460" y="333">DRV3100RPWR</text>
                    <text x="1247" y="298">RTL8201F-VB-CG</text><text x="1229" y="416">25Mhz</text><text x="1328" y="502">ESD224DQAR</text><text x="1091" y="591">CH334P</text><text x="998" y="728">B17C-SOLC6</text>
                    <text x="596" y="496">1</text><text x="614" y="496">1</text><text x="653" y="723">F3</text><text x="788" y="723">C13</text><text x="819" y="695">2</text><text x="819" y="703">+12V</text><text x="694" y="688" class="mid">1</text>
                    <text transform="translate(613 346) rotate(-90)">AF 90° ZJDG ZB</text>
                    <text transform="translate(603 346) rotate(-90)">USB1</text>
                    <text transform="translate(1150 240) rotate(-90)">J3</text>
                    <text transform="translate(1215 235) rotate(-90)">HR911105A_C12074</text>
                    <text transform="translate(747 684) rotate(-90)">C2</text>
                    <text transform="translate(763 684) rotate(-90)">C1</text>
                    <text transform="translate(757 730) rotate(-90)">C10</text>
                    <text transform="translate(777 692) rotate(-90)">F1</text>
                    <text transform="translate(791 692) rotate(-90)">F2</text>
                    <text transform="translate(670 685) rotate(-90)">2</text>
                    <text transform="translate(678 685) rotate(-90)">+5V</text>
                    <text transform="translate(686 743) rotate(-90)" class="mid">2</text>
                    <text transform="translate(697 743) rotate(-90)">Net-(D2-A)</text>
                    <text transform="translate(790 742) rotate(-90)">C15</text>
                </g>
            </svg>
        </div>

        <!-- Right drawing tools -->
        <div class="toolbar side">
            <button class="on" title="選擇"><svg viewBox="0 0 24 24"><path d="M7 4v14l3.500-3 2.500 5 2.500-1.500L13 14h4.500z" fill="#545454" /></svg></button>
            <button title="局部飛線"><svg viewBox="0 0 24 24"><path d="M1 1l22 21M23 2L1 24" stroke="#545454" /><circle cx="11.500" cy="12" r="2.800" fill="#fff" stroke="#545454" /></svg></button>
            <i class="sep"></i>
            <button title="放置封裝"><svg viewBox="0 0 24 24"><use href="#chip" /></svg></button>
            <button title="佈線" class="more"><svg viewBox="0 0 24 24"><path d="M1 23l5-11h11l5-11" fill="none" stroke="#1a81c4" stroke-width="2" /></svg></button>
            <button title="調整長度" class="more"><svg viewBox="0 0 24 24"><path d="M1 11q3-1 3 3t2 4q2 0 2-6t2-6q2 0 2 4t2 4q2 0 1-4t2-4q2 0 2 4t2 4h3" fill="none" stroke="#1a81c4" stroke-width="2" /></svg></button>
            <button title="貫孔"><svg viewBox="0 0 24 24"><circle cx="12" cy="12" r="5" fill="#fff" stroke="#f29100" stroke-width="4" /></svg></button>
            <button title="覆銅區"><svg viewBox="0 0 24 24"><path d="M8 2h14v20H2v-10h6z" fill="#1a81c4" /><path d="M22 8h-5q-4 3 0 6h5z" fill="#fff" /><path d="M15 11h7" stroke="#545454" stroke-width="2.500" /></svg></button>
            <button title="規則區域"><svg viewBox="0 0 24 24"><path d="M8.500 2.500h13v19h-19v-9h6z" fill="none" stroke="#545454" /><path d="M3 13l8 8M3 17l4 4M8 12l10 10M9 8l13 13M9 3l13 13M13 3l9 9M17 3l5 5" stroke="#545454" stroke-width="1.600" /></svg></button>
            <i class="sep"></i>
            <button title="線"><svg viewBox="0 0 24 24"><path d="M2 22L22 2" stroke="#545454" stroke-width="1.800" /></svg></button>
            <button title="弧"><svg viewBox="0 0 24 24"><path d="M2.500 21Q3 4 21 3" fill="none" stroke="#545454" stroke-width="1.800" /></svg></button>
            <button title="矩形"><svg viewBox="0 0 24 24"><path d="M3 4h18v16H3z" fill="#bfbfbf" stroke="#545454" stroke-width="1.800" /></svg></button>
            <button title="圓"><svg viewBox="0 0 24 24"><circle cx="12" cy="12" r="9" fill="#bfbfbf" stroke="#545454" stroke-width="1.800" /></svg></button>
            <button title="多邊形"><svg viewBox="0 0 24 24"><path d="M3 3l18 3-1 12L4 21l6-8z" fill="#bfbfbf" stroke="#545454" stroke-width="1.800" /></svg></button>
            <button title="貝茲曲線"><svg viewBox="0 0 24 24"><path d="M5 22q-1-8 6-9t7-10" fill="none" stroke="#545454" stroke-width="1.800" /><path d="M3 12h18" stroke="#1a81c4" stroke-width="1.500" /><path d="M1 10.500h3v3H1zM20 10.500h3v3h-3z" fill="#1a81c4" /><circle cx="12" cy="12" r="1.500" fill="#fff" stroke="#1a81c4" /></svg></button>
            <button title="圖片"><svg viewBox="0 0 24 24"><rect x="1" y="1" width="22" height="22" rx="3" fill="#545454" /><path d="M3 20l6-10 4 5 3-3 6 8z" fill="#fff" /><circle cx="15.500" cy="6.500" r="2.500" fill="#fff" /></svg></button>
            <button title="文字"><svg viewBox="0 0 24 24"><text x="12" y="22" class="glyph" font-size="28">T</text></svg></button>
            <button title="文字框"><svg viewBox="0 0 24 24"><path d="M3 4h18v16H3z" fill="#bfbfbf" stroke="#545454" stroke-width="1.800" /><path d="M6 8.500h11M6 12h12M6 15.500h8" stroke="#545454" /></svg></button>
            <button title="表格"><svg viewBox="0 0 24 24"><path d="M1 1h22v5H1z" fill="#bfbfbf" /><path d="M.5.500h23v23H.5zM.5 6.500h23M.5 12.500h23M.5 18.500h23M8.500 0v24M16.500 0v24" fill="none" stroke="#545454" /></svg></button>
            <button title="尺寸標註" class="more"><svg viewBox="0 0 24 24"><path d="M3 3.500h20M12 20.500h11M20.500 5v14" stroke="#545454" /><path d="M18.500 8l2-4 2 4zM18.500 16l2 4 2-4z" fill="#545454" /><circle cx="3.500" cy="3.500" r="3" fill="#1a81c4" /><circle cx="12" cy="20.500" r="3" fill="#1a81c4" /></svg></button>
            <button title="刪除"><svg viewBox="0 0 24 24"><path d="M4 1v17l4-4 3 6 3-2-3-5h5z" fill="#545454" /><circle cx="17" cy="17" r="7" fill="#bf2641" /><path d="M14 14l6 6M20 14l-6 6" stroke="#fff" stroke-width="2" /></svg></button>
            <i class="sep"></i>
            <button title="網格原點" class="more"><svg viewBox="0 0 24 24"><path d="M3 3h20M3 9h20M3 15h20M3 21h20" stroke="#545454" stroke-width="3.400" stroke-linecap="round" stroke-dasharray="0 6" /><path d="M9 10v10M4 15h10" stroke="#1a81c4" stroke-width="2" /></svg></button>
            <button title="測量"><svg viewBox="0 0 24 24"><path d="M1 18L18 1l5 5L6 23zM6 14l3 3M9 11l2 2M12 8l3 3M15 5l2 2" fill="none" stroke="#545454" stroke-width="1.700" /></svg></button>
        </div>

        <aside class="panel">
            <h2>外觀</h2>
            <div class="tabs">
                <button class="active">層</button>
                <button>物件</button>
                <button>網路</button>
            </div>
            <div class="layers-box">
                <ul class="layers">
                    <li class="current"><i class="swatch fcu"></i><svg><use href="#eye" /></svg>F.Cu</li>
                    <li><i class="swatch in1"></i><svg><use href="#eye-off" /></svg>In1.Cu</li>
                    <li><i class="swatch in2"></i><svg><use href="#eye" /></svg>In2.Cu</li>
                    <li><i class="swatch in3"></i><svg><use href="#eye" /></svg>In3.Cu</li>
                    <li><i class="swatch in4"></i><svg><use href="#eye-off" /></svg>In4.Cu</li>
                    <li><i class="swatch bcu"></i><svg><use href="#eye" /></svg>B.Cu</li>
                    <li><i class="swatch fadh"></i><svg><use href="#eye" /></svg>F.Adhesive</li>
                    <li><i class="swatch badh"></i><svg><use href="#eye" /></svg>B.Adhesive</li>
                    <li><i class="swatch fpaste"></i><svg><use href="#eye" /></svg>F.Paste</li>
                    <li><i class="swatch bpaste"></i><svg><use href="#eye" /></svg>B.Paste</li>
                    <li><i class="swatch fsilk"></i><svg><use href="#eye" /></svg>F.Silkscreen</li>
                    <li><i class="swatch bsilk"></i><svg><use href="#eye" /></svg>B.Silkscreen</li>
                    <li><i class="swatch fmask"></i><svg><use href="#eye" /></svg>F.Mask</li>
                    <li><i class="swatch bmask"></i><svg><use href="#eye" /></svg>B.Mask</li>
                    <li><i class="swatch user1"></i><svg><use href="#eye" /></svg>User.Drawings</li>
                    <li><i class="swatch user2"></i><svg><use href="#eye" /></svg>User.Comments</li>
                    <li><i class="swatch user3"></i><svg><use href="#eye" /></svg>User.Eco1</li>
                    <li><i class="swatch user4"></i><svg><use href="#eye" /></svg>User.Eco2</li>
                    <li><i class="swatch edge"></i><svg><use href="#eye" /></svg>Edge.Cuts</li>
                    <li><i class="swatch margin"></i><svg><use href="#eye" /></svg>Margin</li>
                    <li><i class="swatch margin"></i><svg><use href="#eye" /></svg>F.Courtyard</li>
                    <li><i class="swatch bcrt"></i><svg><use href="#eye" /></svg>B.Courtyard</li>
                    <li><i class="swatch ffab"></i><svg><use href="#eye" /></svg>F.Fab</li>
                    <li><i class="swatch bfab"></i><svg><use href="#eye" /></svg>B.Fab</li>
                    <li><i class="swatch user1"></i><svg><use href="#eye" /></svg>User.1</li>
                    <li><i class="swatch user2"></i><svg><use href="#eye" /></svg>User.2</li>
                    <li><i class="swatch user3"></i><svg><use href="#eye" /></svg>User.3</li>
                    <li><i class="swatch user4"></i><svg><use href="#eye" /></svg>User.4</li>
                </ul>
                <button class="disclosure">層顯示選項</button>
            </div>
            <div class="presets">
                <label for="preset">預設 (Ctrl+Tab):</label>
                <span class="select"><select id="preset"><option>---</option></select></span>
                <label for="viewport">視角 (Shift+Tab):</label>
                <span class="select"><select id="viewport"><option>---</option></select></span>
            </div>
            <h2 class="filter-title">選擇篩選器</h2>
            <div class="filters">
                <label><input type="checkbox" checked>所有項目</label>
                <label><input type="checkbox">鎖定項目</label>
                <label><input type="checkbox" checked>封裝</label>
                <label><input type="checkbox" checked>文字</label>
                <label><input type="checkbox" checked>走線</label>
                <label><input type="checkbox" checked>貫孔</label>
                <label><input type="checkbox" checked>焊盤</label>
                <label><input type="checkbox" checked>圖形</label>
                <label><input type="checkbox" checked>覆銅</label>
                <label><input type="checkbox" checked>規則區域</label>
                <label><input type="checkbox" checked>測量標註</label>
                <label><input type="checkbox" checked>其他項目</label>
            </div>
        </aside>
    </main>

    <!-- Board statistics -->
    <dl class="stats">
        <div class="wide"><dt>焊盤</dt><dd>1339</dd></div>
        <div><dt>貫孔</dt><dd>268</dd></div>
        <div><dt>走線段</dt><dd>290</dd></div>
        <div><dt>網路</dt><dd>790</dd></div>
        <div><dt>未佈線</dt><dd>204</dd></div>
    </dl>

    <footer class="statusbar">
        <span class="msg">檔案 'E:\Xeltri\KiCad\Xeltri\Xeltri.kicad_pcb' 已儲存。</span>
        <span class="zoom">Z 1.35</span>
        <span class="pos">X -13.8900&nbsp; Y 37.9000</span>
        <span class="delta">dx -13.8900&nbsp; dy 37.9000&nbsp; dist 40.3651</span>
        <span class="snap">網格 0.0100</span>
        <span class="unit">mm</span>
        <span class="mode">選擇項目</span>
        <span class="rest"></span>
    </footer>
</body>

</html>
```
FILE: styles.css
```css
* {
    box-sizing: border-box;
}

html,
body {
    margin: 0;
    padding: 0;
    height: 100%;
}

body {
    display: flex;
    flex-direction: column;
    background: #f0f0f0;
    color: #000;
    font-family: 'Open Sans', 'Noto Sans CJK TC', sans-serif;
    font-size: 12px;
    line-height: 16px;
    overflow: hidden;
}

button,
select,
input {
    font: inherit;
    color: inherit;
    margin: 0;
}

button {
    border: none;
    background: none;
    padding: 0;
}

.defs {
    position: absolute;
}

/* Title bar */
.titlebar {
    display: flex;
    align-items: center;
    flex: none;
    height: 23px;
    padding-left: 2px;
    background: #f2eff7;
}

.titlebar h1 {
    margin: 0 0 0 6px;
    font-size: 12px;
    font-weight: normal;
}

.app-icon {
    width: 16px;
    height: 16px;
}

.window-buttons {
    display: flex;
    margin-left: auto;
}

.window-buttons button {
    width: 46px;
    height: 20px;
}

.window-buttons svg {
    width: 10px;
    height: 10px;
    fill: none;
    stroke: #111;
}

/* Menu */
.menubar {
    display: flex;
    align-items: center;
    flex: none;
    gap: 15px;
    height: 18px;
    padding: 2px 0 0 8px;
    background: #fff;
}

.menubar a {
    color: #000;
    text-decoration: none;
}

/* Toolbars */
.toolbar {
    display: flex;
    flex: none;
}

.toolbar button {
    display: flex;
    align-items: center;
    justify-content: center;
    flex: none;
    width: 30px;
    height: 30px;
    margin: 1px;
}

.toolbar svg {
    width: 24px;
    height: 24px;
    overflow: visible;
}

.toolbar .on {
    background: #b4d6f4;
    border: 1px solid #0078d7;
}

.toolbar .faded {
    opacity: 0.6;
}

.toolbar .more {
    position: relative;
}

/* corner mark of a button with a submenu */
.toolbar .more::after {
    content: "";
    position: absolute;
    right: 0;
    bottom: 0;
    width: 7px;
    height: 7px;
    background: linear-gradient(135deg, transparent 50%, #000 50%);
}

.sep {
    flex: none;
    width: 8px;
    height: 26px;
    background: linear-gradient(#848484, #848484) center / 1px 100% no-repeat;
}

.main-tools {
    height: 35px;
    padding: 3px 4px 0;
}

.main-tools .sep {
    margin-top: 3px;
}

.aux-tools {
    align-items: center;
    height: 35px;
    padding-left: 5px;
}

.aux-tools .sep {
    margin: 0 1px 0 0;
}

.side {
    flex-direction: column;
    width: 34px;
    padding: 4px 1px;
}

.side .sep {
    width: 26px;
    height: 8px;
    margin-left: 3px;
    background-size: 100% 1px;
}

.glyph {
    fill: #545454;
    font-family: 'Open Sans', sans-serif;
    font-weight: bold;
    text-anchor: middle;
}

/* Drop-downs */
.select {
    position: relative;
    display: block;
    height: 23px;
}

.select select {
    display: block;
    width: 100%;
    height: 100%;
    padding: 0 20px 0 3px;
    border: 1px solid #d0d0d0;
    border-bottom-color: #b8b8b8;
    border-radius: 2px;
    background: #fdfdfd;
    appearance: none;
}

.select::after {
    content: "";
    position: absolute;
    right: 7px;
    top: 7px;
    width: 5px;
    height: 5px;
    border: solid #555;
    border-width: 0 1px 1px 0;
    transform: rotate(45deg);
    pointer-events: none;
}

.dark select {
    padding-left: 20px;
    border-color: #808080;
}

.dark .swatch {
    position: absolute;
    left: 6px;
    top: 5px;
    width: 13px;
    height: 13px;
    border: 1px solid #333;
}

.w-track {
    width: 142px;
}

.w-track + button {
    margin: 0 2px;
}

.w-via {
    width: 281px;
}

.w-layer {
    width: 142px;
}

.w-layer + button {
    margin: 0 1px;
}

.w-grid {
    width: 161px;
}

.w-zoom {
    width: 117px;
}

/* Workspace */
.workspace {
    display: flex;
    flex: 1;
    min-height: 0;
}

.board {
    flex: 1;
    min-width: 0;
    border: 1px solid #a0a0a0;
    background: #001023;
}

.board svg {
    display: block;
    width: 100%;
    height: 100%;
}

.grid {
    fill: none;
    stroke: #848484;
}

.sheet {
    fill: none;
    stroke: #c872aa;
}

.sheet-mark {
    fill: #c872aa;
    font-family: 'Roboto', sans-serif;
    font-size: 9px;
    text-anchor: middle;
}

.sheet-text {
    fill: #c872aa;
    font-family: 'Roboto', sans-serif;
    font-size: 11px;
}

.sheet-text .title {
    font-size: 14px;
    font-weight: bold;
    font-style: italic;
}

.court {
    fill: none;
    stroke: #ff26e2;
}

.bcourt {
    fill: none;
    stroke: #26e9ff;
}

.silk {
    fill: none;
    stroke: #f2eda1;
}

.silk-thick {
    fill: none;
    stroke: #f2eda1;
    stroke-width: 3;
}

.cu {
    fill: #b83a3c;
}

.body {
    fill: #c4c0b4;
}

.track {
    fill: none;
    stroke: #c83434;
}

.slot {
    fill: #001023;
    stroke: #b8303a;
    stroke-width: 2;
}

.pins {
    fill: none;
    stroke-linecap: round;
    stroke-dasharray: 0 9.6;
}

.hole {
    fill: #1ac4d2;
}

.rats {
    fill: none;
    stroke: #006b80;
    opacity: 0.85;
}

.ref,
.value {
    font-family: 'DejaVu Sans Mono', monospace;
    font-size: 8px;
    text-anchor: middle;
}

.ref {
    fill: #f2eda1;
}

.value {
    fill: #b8b8b8;
}

.value .mid {
    font-size: 12px;
}

.value .big {
    fill: #e0c0c0;
    font-size: 15px;
}

/* Appearance panel */
.panel {
    display: flex;
    flex-direction: column;
    flex: none;
    width: 223px;
    border-left: 4px solid #dcdcdc;
}

.panel h2 {
    flex: none;
    height: 21px;
    margin: 0;
    padding: 2px 3px;
    background: #b9b9b9;
    font-size: 12px;
    font-weight: normal;
}

.tabs {
    display: flex;
    align-items: flex-end;
    height: 28px;
    padding: 5px 1px 0;
}

.tabs button {
    width: 46px;
    height: 21px;
    padding-left: 5px;
    border: 1px solid #e2e2e2;
    border-bottom: none;
    background: #f3f3f3;
    text-align: left;
}

.tabs .active {
    width: 50px;
    height: 23px;
    padding: 0 0 3px 7px;
    background: #f9f9f9;
}

.layers-box {
    display: flex;
    flex: 1;
    flex-direction: column;
    min-height: 0;
    margin: 0 2px 0 1px;
    padding: 1px 0 2px 3px;
    border: solid #e2e2e2;
    border-width: 0 1px 1px 0;
    background: #f9f9f9;
}

.layers {
    flex: 1;
    min-height: 0;
    margin: 0;
    padding: 0;
    list-style: none;
    background: #f0f0f0;
    font-size: 11px;
    overflow: hidden;
}

.layers li {
    display: flex;
    align-items: center;
    height: 18px;
    padding-left: 16px;
}

.layers svg {
    width: 16px;
    height: 16px;
    margin: 0 5px 0 6px;
}

.layers .current {
    padding-left: 5px;
    background: #e2e2e2;
}

.current::before {
    content: "";
    width: 11px;
    height: 8px;
    background: #4040ff;
    clip-path: polygon(0 0, 5px 50%, 0 100%);
}

.swatch {
    display: block;
    width: 14px;
    height: 11px;
}

.disclosure {
    height: 19px;
    margin: 5px 0 0 5px;
    padding-left: 7px;
    background: #fff;
    font-size: 11px;
    text-align: left;
}

.disclosure::before {
    content: "";
    display: inline-block;
    margin-right: 2px;
    border: 4px solid transparent;
    border-left-color: #000;
    border-right-width: 0;
}

.presets {
    padding: 12px 6px 3px 7px;
}

.presets label {
    display: block;
    padding-bottom: 2px;
    font-size: 11px;
}

.presets .select {
    margin-bottom: 3px;
}

.panel .filter-title {
    height: 25px;
    border-top: 4px solid #dcdcdc;
}

.filters {
    display: grid;
    grid-template-columns: 75px 1fr;
    grid-auto-rows: 15px;
    padding: 4px 5px 5px;
}

.filters label {
    display: flex;
    align-items: center;
    gap: 4px;
    font-size: 11px;
}

.filters input {
    flex: none;
    width: 13px;
    height: 13px;
    border: 1px solid #666;
    border-radius: 3px;
    background: #f7f7f7;
    appearance: none;
}

.filters input:checked {
    border-color: #005fb8;
    background: #005fb8;
}

.filters input:checked::after {
    content: "";
    display: block;
    width: 6px;
    height: 3px;
    margin: 3px 0 0 2px;
    border: solid #cfe3f5;
    border-width: 0 0 1px 1px;
    transform: rotate(-45deg);
}

/* Layer colours */
.fcu { background: #c83434; }
.in1 { background: #7fc87f; }
.in2 { background: #ce7d2c; }
.in3 { background: #4fcbcb; }
.in4 { background: #db628b; }
.bcu { background: #4d7fc4; }
.fadh { background: #840084; }
.badh { background: #000084; }
.fpaste { background: #a8948c; }
.bpaste { background: #00b2b2; }
.fsilk { background: #f2eda1; }
.bsilk { background: #e8b2a7; }
.fmask { background: repeating-conic-gradient(#6b3b7b 0 25%, #552663 0 50%) 0 0 / 10px 8px; }
.bmask { background: repeating-conic-gradient(#02655c 0 25%, #177a70 0 50%) 0 0 / 10px 8px; }
.user1 { background: #c2c2c2; }
.user2 { background: #5994dc; }
.user3 { background: #b4dbd2; }
.user4 { background: #d8c852; }
.edge { background: #d0d2cd; }
.margin { background: #ff26e2; }
.bcrt { background: #26e9ff; }
.ffab { background: #afafaf; }
.bfab { background: #585d84; }

/* Bottom rows */
.stats {
    display: flex;
    flex: none;
    height: 32px;
    margin: 0;
    padding: 1px 0 0 12px;
    border-bottom: 1px solid #d7d7d7;
}

.stats div {
    width: 51px;
}

.stats .wide {
    width: 58px;
}

.stats dt,
.stats dd {
    margin: 0;
    height: 15px;
}

.statusbar {
    display: flex;
    flex: none;
    height: 21px;
    padding: 2px 0 0;
}

.statusbar span {
    flex: none;
    padding: 1px 0 0 4px;
    border-left: 1px solid #d7d7d7;
    white-space: nowrap;
}

.statusbar .msg {
    flex: 1;
    padding-left: 3px;
    border: none;
}

.zoom { width: 86px; }
.pos { width: 179px; }
.delta { width: 280px; }
.snap { width: 205px; }
.unit { width: 58px; }
.mode { width: 185px; }
.rest { width: 330px; }
```
